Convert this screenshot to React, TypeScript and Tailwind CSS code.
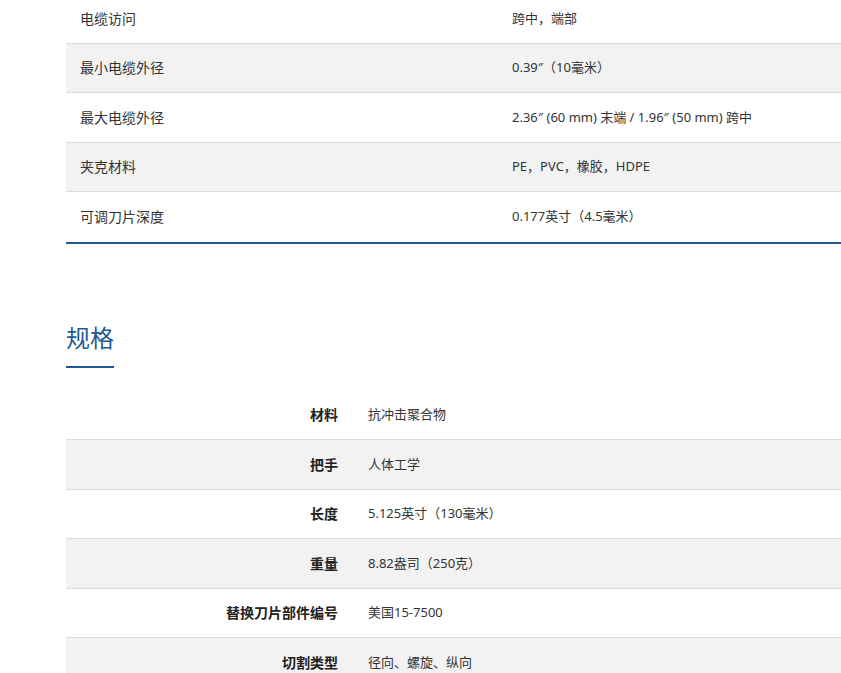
const top: [string, string][] = [
  ["电缆访问", "跨中，端部"],
  ["最小电缆外径", "0.39″（10毫米）"],
  ["最大电缆外径", "2.36″ (60 mm) 末端 / 1.96″ (50 mm) 跨中"],
  ["夹克材料", "PE，PVC，橡胶，HDPE"],
  ["可调刀片深度", "0.177英寸（4.5毫米）"],
];
const spec: [string, string][] = [
  ["材料", "抗冲击聚合物"],
  ["把手", "人体工学"],
  ["长度", "5.125英寸（130毫米）"],
  ["重量", "8.82盎司（250克）"],
  ["替换刀片部件编号", "美国15-7500"],
  ["切割类型", "径向、螺旋、纵向"],
];
export default function App() {
  return (
    <div className="w-[841px] h-[673px] overflow-hidden bg-white text-[14px] text-[#333]" style={{ fontFamily: '"Noto Sans", "Noto Sans CJK SC", sans-serif' }}>
      <div className="ml-[66px] w-[800px] -mt-[6px]">
        <div className="border-b-[2px] border-[#1f5a96]">
          {top.map(([a, b], i) => (
            <div key={i} className={`flex h-[49.5px] items-center ${i % 2 ? "bg-[#f2f2f2]" : "bg-white"} ${i < top.length - 1 ? "border-b border-[#dcdcdc]" : ""}`}>
              <div className="w-[446px] pl-[14px]">{a}</div>
              <div className="text-[13px]">{b}</div>
            </div>
          ))}
        </div>
        <div className="mt-[76px] text-[24px] leading-[36px] text-[#1f5a96]">规格</div>
        <div className="mt-[10px] w-[48px] h-[2px] bg-[#1f5a96]" />
        <div className="mt-[23px]">
          {spec.map(([a, b], i) => (
            <div key={i} className={`flex h-[49.5px] items-center ${i % 2 ? "bg-[#f2f2f2]" : "bg-white"} border-b border-[#dcdcdc]`}>
              <div className="w-[287px] pr-[15px] text-right font-bold text-[#222]">{a}</div>
              <div className="pl-[15px] text-[13px]">{b}</div>
            </div>
          ))}
        </div>
      </div>
    </div>
  );
}
